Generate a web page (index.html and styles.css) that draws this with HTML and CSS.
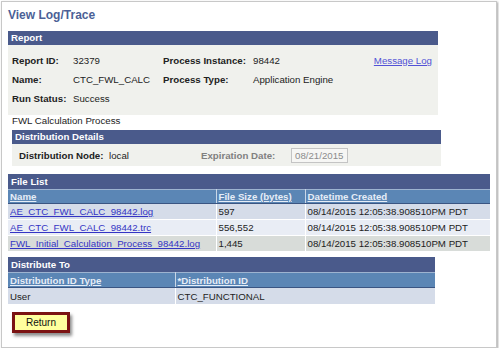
FILE: index.html
```html
<!DOCTYPE html>
<html lang="en">
<head>
    <meta charset="UTF-8">
    <title>View Log/Trace</title>
    <link rel="stylesheet" href="styles.css">
</head>
<body>

<div class="frame">
    <h1 class="page-title">View Log/Trace</h1>

    <!-- Report -->
    <div class="box report">
        <div class="box-head">Report</div>
        <div class="report-body">
            <span class="lbl">Report ID:</span>
            <span>32379</span>
            <span class="lbl">Process Instance:</span>
            <span>98442</span>
            <a href="#" class="msg-link">Message Log</a>

            <span class="lbl">Name:</span>
            <span>CTC_FWL_CALC</span>
            <span class="lbl">Process Type:</span>
            <span>Application Engine</span>
            <span></span>

            <span class="lbl">Run Status:</span>
            <span>Success</span>
        </div>
    </div>

    <div class="desc">FWL Calculation Process</div>

    <!-- Distribution Details -->
    <div class="box dist">
        <div class="box-head">Distribution Details</div>
        <div class="dist-body">
            <span class="lbl node-lbl">Distribution Node:</span>
            <span class="node-val">local</span>
            <span class="lbl off">Expiration Date:</span>
            <span class="date-box">08/21/2015</span>
        </div>
    </div>

    <!-- File List -->
    <div class="box files">
        <div class="box-head">File List</div>
        <table class="grid">
            <colgroup>
                <col style="width: 208px">
                <col style="width: 89px">
                <col>
            </colgroup>
            <tr>
                <th><a href="#">Name</a></th>
                <th><a href="#">File Size (bytes)</a></th>
                <th><a href="#">Datetime Created</a></th>
            </tr>
            <tr class="r1">
                <td><a href="#">AE_CTC_FWL_CALC_98442.log</a></td>
                <td>597</td>
                <td>08/14/2015 12:05:38.908510PM PDT</td>
            </tr>
            <tr class="r2">
                <td><a href="#">AE_CTC_FWL_CALC_98442.trc</a></td>
                <td>556,552</td>
                <td>08/14/2015 12:05:38.908510PM PDT</td>
            </tr>
            <tr class="r3">
                <td><a href="#">FWL_Initial_Calculation_Process_98442.log</a></td>
                <td>1,445</td>
                <td>08/14/2015 12:05:38.908510PM PDT</td>
            </tr>
        </table>
    </div>

    <!-- Distribute To -->
    <div class="box dest">
        <div class="box-head">Distribute To</div>
        <table class="grid">
            <colgroup>
                <col style="width: 167px">
                <col>
            </colgroup>
            <tr>
                <th><a href="#">Distribution ID Type</a></th>
                <th><a href="#">*Distribution ID</a></th>
            </tr>
            <tr class="r1 tall">
                <td>User</td>
                <td>CTC_FUNCTIONAL</td>
            </tr>
        </table>
    </div>

    <div class="btn-wrap">
        <button class="btn-return">Return</button>
    </div>
</div>

</body>
</html>
```

FILE: styles.css
```css
body {
    margin: 0;
    background-color: #FFFFFF;
    font-family: "Liberation Sans", Arial, sans-serif;
    font-size: 9.7px;
    color: #222222;
}
.frame {
    box-sizing: border-box;
    margin: 1px 0 0 1px;
    width: 496px;
    height: 347px;
    padding: 0 0 0 6px;
    border: 1px solid #C8C8C8;
    box-shadow: 1px 1px 2px rgba(0, 0, 0, 0.35);
}
.page-title {
    margin: 6px 0 0 0;
    height: 14px;
    line-height: 14px;
    font-size: 12px;
    font-weight: bold;
    color: #4B5F96;
}
.box-head {
    height: 14px;
    line-height: 14px;
    padding-left: 3px;
    font-weight: bold;
    color: #FFFFFF;
    background-color: #4A5A8B;
}
.lbl {
    font-weight: bold;
}
a {
    color: #3434C4;
}

/* report */
.report {
    margin-top: 9px;
    width: 430px;
}
.report-body {
    display: grid;
    grid-template-columns: 61px 90px 90px 1fr auto;
    grid-auto-rows: 19px;
    align-items: center;
    height: 70px;
    box-sizing: border-box;
    padding: 6px 6px 0 4px;
    background-color: #F0F1ED;
}
.msg-link {
    color: #5252D6;
}
.desc {
    height: 11px;
    line-height: 11px;
    padding: 0 0 0 4px;
    margin-top: 0;
}

/* distribution */
.dist {
    margin: 4px 0 0 4px;
    width: 429px;
}
.dist-body {
    display: flex;
    align-items: center;
    height: 22px;
    padding-left: 7px;
    background-color: #F0F1ED;
}
.node-lbl {
    width: 90px;
}
.node-val {
    width: 92px;
}
.off {
    color: #808080;
    width: 90px;
}
.date-box {
    box-sizing: border-box;
    width: 57px;
    height: 15px;
    line-height: 13px;
    padding-left: 3px;
    border: 1px solid #C4C4C4;
    color: #8C8C8C;
    background-color: #F6F6F4;
}

/* grids */
.files {
    margin-top: 8px;
    width: 482px;
}
.files .box-head,
.dest .box-head {
    height: 15px;
    line-height: 15px;
}
.grid {
    width: 100%;
    border-collapse: collapse;
    table-layout: fixed;
}
.grid th {
    height: 13px;
    padding: 0 0 0 2px;
    text-align: left;
    border-top: 1px solid #9DB3D0;
    border-bottom: 1px solid #3A5582;
    border-right: 1px solid #C9D6E6;
    background-color: #5B86B5;
}
.grid th:last-child {
    border-right: none;
}
.grid th a {
    color: #E6EDF7;
}
.grid td {
    height: 15px;
    padding: 0 0 0 2px;
    border-bottom: 1px solid #FFFFFF;
    border-right: 1px solid #FFFFFF;
    white-space: nowrap;
    overflow: hidden;
}
.grid td:last-child {
    border-right: none;
}
.r1 td {
    background-color: #D5DCE9;
}
.r2 td {
    background-color: #E9EDF5;
}
.r3 td {
    background-color: #D8DCD9;
}
.dest {
    margin-top: 5px;
    width: 427px;
}
.dest th {
    height: 14px;
}
.tall td {
    height: 16px;
}

/* button */
.btn-wrap {
    margin: 7px 0 0 4px;
}
.btn-return {
    box-sizing: border-box;
    width: 58px;
    height: 21px;
    padding: 0;
    font-family: "Liberation Sans", Arial, sans-serif;
    font-size: 10px;
    color: #111111;
    background-color: #FFFF9E;
    border: 3px solid #7B1212;
    box-shadow: 2px 3px 3px rgba(0, 0, 0, 0.45);
    cursor: pointer;
}
```
